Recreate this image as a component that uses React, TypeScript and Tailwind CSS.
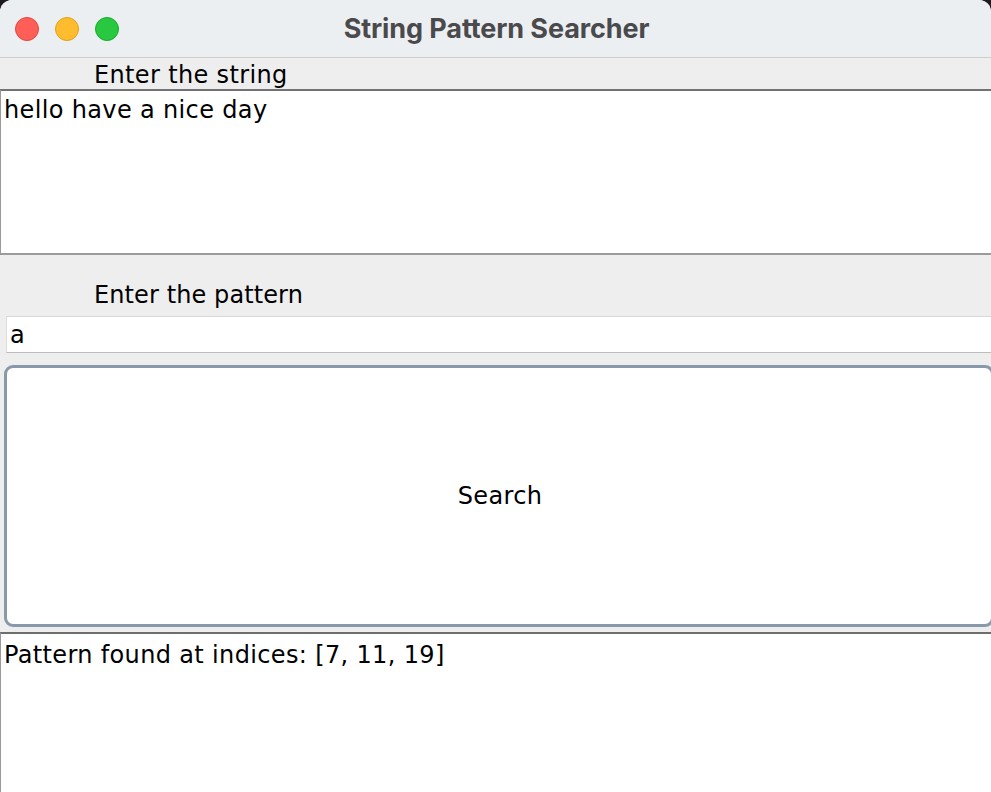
import React from 'react';

const bodyFont = "font-['Lucida_Grande','DejaVu_Sans',sans-serif] tracking-[0.35px]";

export default function App() {
  return (
    <div className="w-[991px] h-[792px] bg-[#1c1c1e] overflow-hidden">
      <div className="w-full h-full rounded-t-[12px] overflow-hidden bg-[#eeeeee] flex flex-col">
        {/* Title bar */}
        <div className="relative h-[58px] shrink-0 bg-[#eceff2] border-b border-[#cdcdcd] flex items-center justify-center">
          <div className="absolute left-[15px] top-[17px] flex gap-[16px]">
            <span className="w-[24px] h-[24px] rounded-full bg-[#ff5f57] border border-[#e2463f]"></span>
            <span className="w-[24px] h-[24px] rounded-full bg-[#febc2e] border border-[#e1a116]"></span>
            <span className="w-[24px] h-[24px] rounded-full bg-[#28c840] border border-[#1aab29]"></span>
          </div>
          <span className="font-['Inter','Liberation_Sans',sans-serif] font-bold text-[27px] tracking-[-0.1px] text-[#4a4a4d] pt-[1px] pl-[2px]">
            String Pattern Searcher
          </span>
        </div>

        {/* Enter the string */}
        <div className={`h-[31px] shrink-0 pl-[94px] flex items-end ${bodyFont} text-[24px] leading-[28px] text-black`}>
          Enter the string
        </div>
        <div className={`h-[166px] shrink-0 bg-white border-t-2 border-t-[#727272] border-l border-l-[#9a9a9a] border-b-2 border-b-[#9a9a9a] pl-[3px] ${bodyFont} text-[24px] leading-[38px] text-black`}>
          hello have a nice day
        </div>

        {/* Enter the pattern */}
        <div className={`h-[61px] shrink-0 pl-[94px] pb-[7px] flex items-end ${bodyFont} text-[24px] leading-[28px] text-black`}>
          <span className="tracking-[0.1px]">Enter the pattern</span>
        </div>
        <div className={`h-[37px] shrink-0 ml-[6px] bg-white border-t border-t-[#d8d8d8] border-b border-b-[#bdbdbd] border-l border-l-[#dcdcdc] pl-[3px] flex items-center ${bodyFont} text-[24px] text-black`}>
          a
        </div>

        {/* Search button */}
        <div className="pt-[12px] pb-[5px] pl-[4px] shrink-0">
          <button className={`w-[990px] h-[262px] bg-white border-[3px] border-[#8a98ab] rounded-[9px] flex items-center justify-center ${bodyFont} text-[24px] text-black`}>
            <span className="pl-[2px]">Search</span>
          </button>
        </div>

        {/* Output */}
        <div className={`flex-1 bg-white border-t-2 border-t-[#6e6e6e] border-l border-l-[#9a9a9a] pl-[3px] pt-[1px] ${bodyFont} text-[24px] leading-[40px] text-black`}>
          Pattern found at indices: [7, 11, 19]
        </div>
      </div>
    </div>
  );
}
